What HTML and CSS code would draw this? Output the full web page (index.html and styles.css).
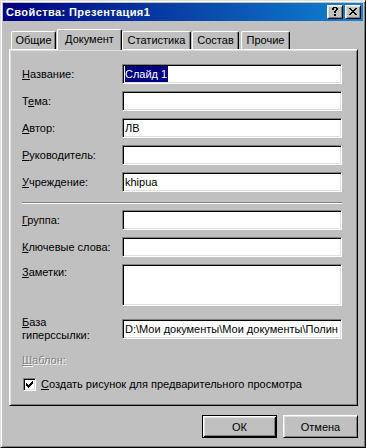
FILE: index.html
```html
<!DOCTYPE html>
<html lang="ru">
<head>
<meta charset="utf-8">
<title>Свойства: Презентация1</title>
<link rel="stylesheet" href="styles.css">
</head>
<body>
<div class="window">
  <div class="titlebar">
    <span class="title">Свойства: Презентация1</span>
    <div class="tbtns">
      <div class="tbtn">
        <svg width="14" height="12" viewBox="0 0 14 12" shape-rendering="crispEdges">
          <g fill="#000">
            <rect x="5" y="1" width="4" height="1"/>
            <rect x="4" y="2" width="2" height="2"/>
            <rect x="8" y="2" width="2" height="2"/>
            <rect x="7" y="4" width="2" height="1"/>
            <rect x="6" y="5" width="2" height="2"/>
            <rect x="6" y="8" width="2" height="2"/>
          </g>
        </svg>
      </div>
      <div class="tbtn">
        <svg width="14" height="12" viewBox="0 0 14 12" shape-rendering="crispEdges">
          <g fill="#000">
            <rect x="3" y="2" width="2" height="1"/><rect x="9" y="2" width="2" height="1"/>
            <rect x="4" y="3" width="2" height="1"/><rect x="8" y="3" width="2" height="1"/>
            <rect x="5" y="4" width="4" height="1"/>
            <rect x="6" y="5" width="2" height="1"/>
            <rect x="5" y="6" width="4" height="1"/>
            <rect x="4" y="7" width="2" height="1"/><rect x="8" y="7" width="2" height="1"/>
            <rect x="3" y="8" width="2" height="1"/><rect x="9" y="8" width="2" height="1"/>
          </g>
        </svg>
      </div>
    </div>
  </div>

  <div class="content">
    <div class="tabs">
      <div class="tab tab-general">Общие</div>
      <div class="tab tab-doc selected">Документ</div>
      <div class="tab tab-stat">Статистика</div>
      <div class="tab tab-contents">Состав</div>
      <div class="tab tab-other">Прочие</div>
    </div>

    <div class="panel">
      <div class="row first">
        <div class="lbl"><u>Н</u>азвание:</div>
        <div class="edit"><span class="hl">Слайд 1</span></div>
      </div>
      <div class="row">
        <div class="lbl">Т<u>е</u>ма:</div>
        <div class="edit"></div>
      </div>
      <div class="row">
        <div class="lbl"><u>А</u>втор:</div>
        <div class="edit">ЛВ</div>
      </div>
      <div class="row">
        <div class="lbl"><u>Р</u>уководитель:</div>
        <div class="edit"></div>
      </div>
      <div class="row">
        <div class="lbl"><u>У</u>чреждение:</div>
        <div class="edit">khipua</div>
      </div>

      <div class="sep"></div>

      <div class="row after-sep">
        <div class="lbl"><u>Г</u>руппа:</div>
        <div class="edit"></div>
      </div>
      <div class="row">
        <div class="lbl"><u>К</u>лючевые слова:</div>
        <div class="edit"></div>
      </div>
      <div class="row notes-row">
        <div class="lbl notes-lbl"><u>З</u>аметки:</div>
        <div class="edit notes"></div>
      </div>
      <div class="row link-row">
        <div class="lbl"><u>Б</u>аза<br>гиперссылки:</div>
        <div class="edit">D:\Мои документы\Мои документы\Полин</div>
      </div>
      <div class="row template-row">
        <div class="lbl disabled"><u>Ш</u>аблон:</div>
      </div>
      <div class="row check-row">
        <div class="checkbox">
          <svg width="7" height="7" viewBox="0 0 7 7" shape-rendering="crispEdges">
            <g fill="#000">
              <rect x="6" y="0" width="1" height="1"/>
              <rect x="5" y="1" width="2" height="1"/>
              <rect x="0" y="2" width="1" height="1"/><rect x="4" y="2" width="3" height="1"/>
              <rect x="0" y="3" width="2" height="1"/><rect x="3" y="3" width="3" height="1"/>
              <rect x="0" y="4" width="5" height="1"/>
              <rect x="1" y="5" width="3" height="1"/>
              <rect x="2" y="6" width="1" height="1"/>
            </g>
          </svg>
        </div>
        <div class="check-label"><u>С</u>оздать рисунок для предварительного просмотра</div>
      </div>
    </div>

    <div class="buttons">
      <div class="btn default">ОК</div>
      <div class="btn">Отмена</div>
    </div>
  </div>
</div>
</body>
</html>
```

FILE: styles.css
```css
* { box-sizing: border-box; }

html, body {
  margin: 0;
  padding: 0;
  background: #c0c0c0;
}

body {
  font-family: "Liberation Sans", Arial, sans-serif;
  font-size: 11px;
  color: #000;
}

u { text-decoration: underline; text-underline-offset: 1px; }

.window {
  width: 366px;
  height: 448px;
  background: #c0c0c0;
  border: 1px solid;
  border-color: #dfdfdf #000 #000 #dfdfdf;
  box-shadow: inset 1px 1px #fff, inset -1px -1px #808080;
  padding: 2px;
  display: flex;
  flex-direction: column;
}

.titlebar {
  height: 18px;
  background: linear-gradient(to right, #000080, #1084d0);
  display: flex;
  align-items: center;
  justify-content: space-between;
  padding: 0 2px 0 3px;
}

.title {
  color: #fff;
  font-weight: bold;
  font-size: 11px;
  letter-spacing: 0.4px;
  white-space: nowrap;
}

.tbtns {
  display: flex;
  gap: 2px;
}

.tbtn {
  width: 16px;
  height: 14px;
  background: #c0c0c0;
  border: 1px solid;
  border-color: #fff #000 #000 #fff;
  box-shadow: inset 1px 1px #dfdfdf, inset -1px -1px #808080;
  display: flex;
}

.tbtn svg { display: block; }

.content {
  padding: 8px 0 0 6px;
  display: flex;
  flex-direction: column;
}

.tabs {
  display: flex;
  align-items: flex-end;
  height: 20px;
  padding-left: 2px;
}

.tab {
  height: 18px;
  border-top: 1px solid #fff;
  border-left: 1px solid #fff;
  border-right: 1px solid #000;
  border-top-left-radius: 2px;
  border-top-right-radius: 2px;
  box-shadow: inset -1px 0 #808080;
  display: flex;
  align-items: center;
  justify-content: center;
  white-space: nowrap;
  padding-bottom: 1px;
}

.tab-general { width: 45px; }
.tab-doc { width: 65px; margin-left: 1px; }
.tab-stat { width: 69px; margin-left: 0; }
.tab-contents { width: 47px; margin-left: 1px; }
.tab-other { width: 49px; margin-left: 2px; }

.tab.selected {
  height: 21px;
  margin-bottom: -1px;
  position: relative;
  z-index: 1;
  background: #c0c0c0;
  padding-bottom: 3px;
}

.panel {
  width: 349px;
  height: 357px;
  border: 1px solid;
  border-color: #fff #000 #000 #fff;
  box-shadow: inset 1px 1px #dfdfdf, inset -1px -1px #808080;
  padding: 14px 0 0 12px;
  display: flex;
  flex-direction: column;
}

.row {
  display: flex;
  align-items: center;
}

.row + .row { margin-top: 7px; }

.lbl {
  width: 100px;
  flex: none;
  line-height: 13px;
  white-space: nowrap;
}

.edit {
  width: 220px;
  height: 20px;
  background: #fff;
  border: 1px solid;
  border-color: #808080 #fff #fff #808080;
  box-shadow: inset 1px 1px #000, inset -1px -1px #dfdfdf;
  padding: 1px 2px;
  line-height: 16px;
  white-space: nowrap;
  overflow: hidden;
  display: flex;
  align-items: center;
}

.hl {
  background: #000080;
  color: #fff;
  padding: 0 1px 0 0;
}

.sep {
  width: 320px;
  height: 2px;
  border-top: 1px solid #808080;
  border-bottom: 1px solid #fff;
  margin: 10px 0 6px;
}

.row.after-sep { margin-top: 0; }

.notes-row { align-items: flex-start; }
.notes-lbl { padding-top: 2px; }
.edit.notes { height: 42px; }

.row.link-row { margin-top: 10px; }

.row.template-row { margin-top: 12px; }

.disabled {
  color: #808080;
  text-shadow: 1px 1px 0 #fff;
}

.row.check-row { margin-top: 11px; }

.checkbox {
  width: 13px;
  height: 13px;
  margin-left: 1px;
  background: #fff;
  border: 1px solid;
  border-color: #808080 #fff #fff #808080;
  box-shadow: inset 1px 1px #000, inset -1px -1px #dfdfdf;
  padding: 2px;
  display: flex;
}

.checkbox svg { display: block; }

.check-label {
  margin-left: 5px;
  line-height: 13px;
  white-space: nowrap;
}

.buttons {
  width: 349px;
  display: flex;
  justify-content: flex-end;
  gap: 6px;
  margin-top: 9px;
}

.btn {
  width: 75px;
  height: 23px;
  border: 1px solid;
  border-color: #fff #000 #000 #fff;
  box-shadow: inset 1px 1px #dfdfdf, inset -1px -1px #808080;
  display: flex;
  align-items: center;
  justify-content: center;
}

.btn.default {
  border-color: #000;
  box-shadow: inset 1px 1px #fff, inset -1px -1px #000, inset 2px 2px #dfdfdf, inset -2px -2px #808080;
}
```
